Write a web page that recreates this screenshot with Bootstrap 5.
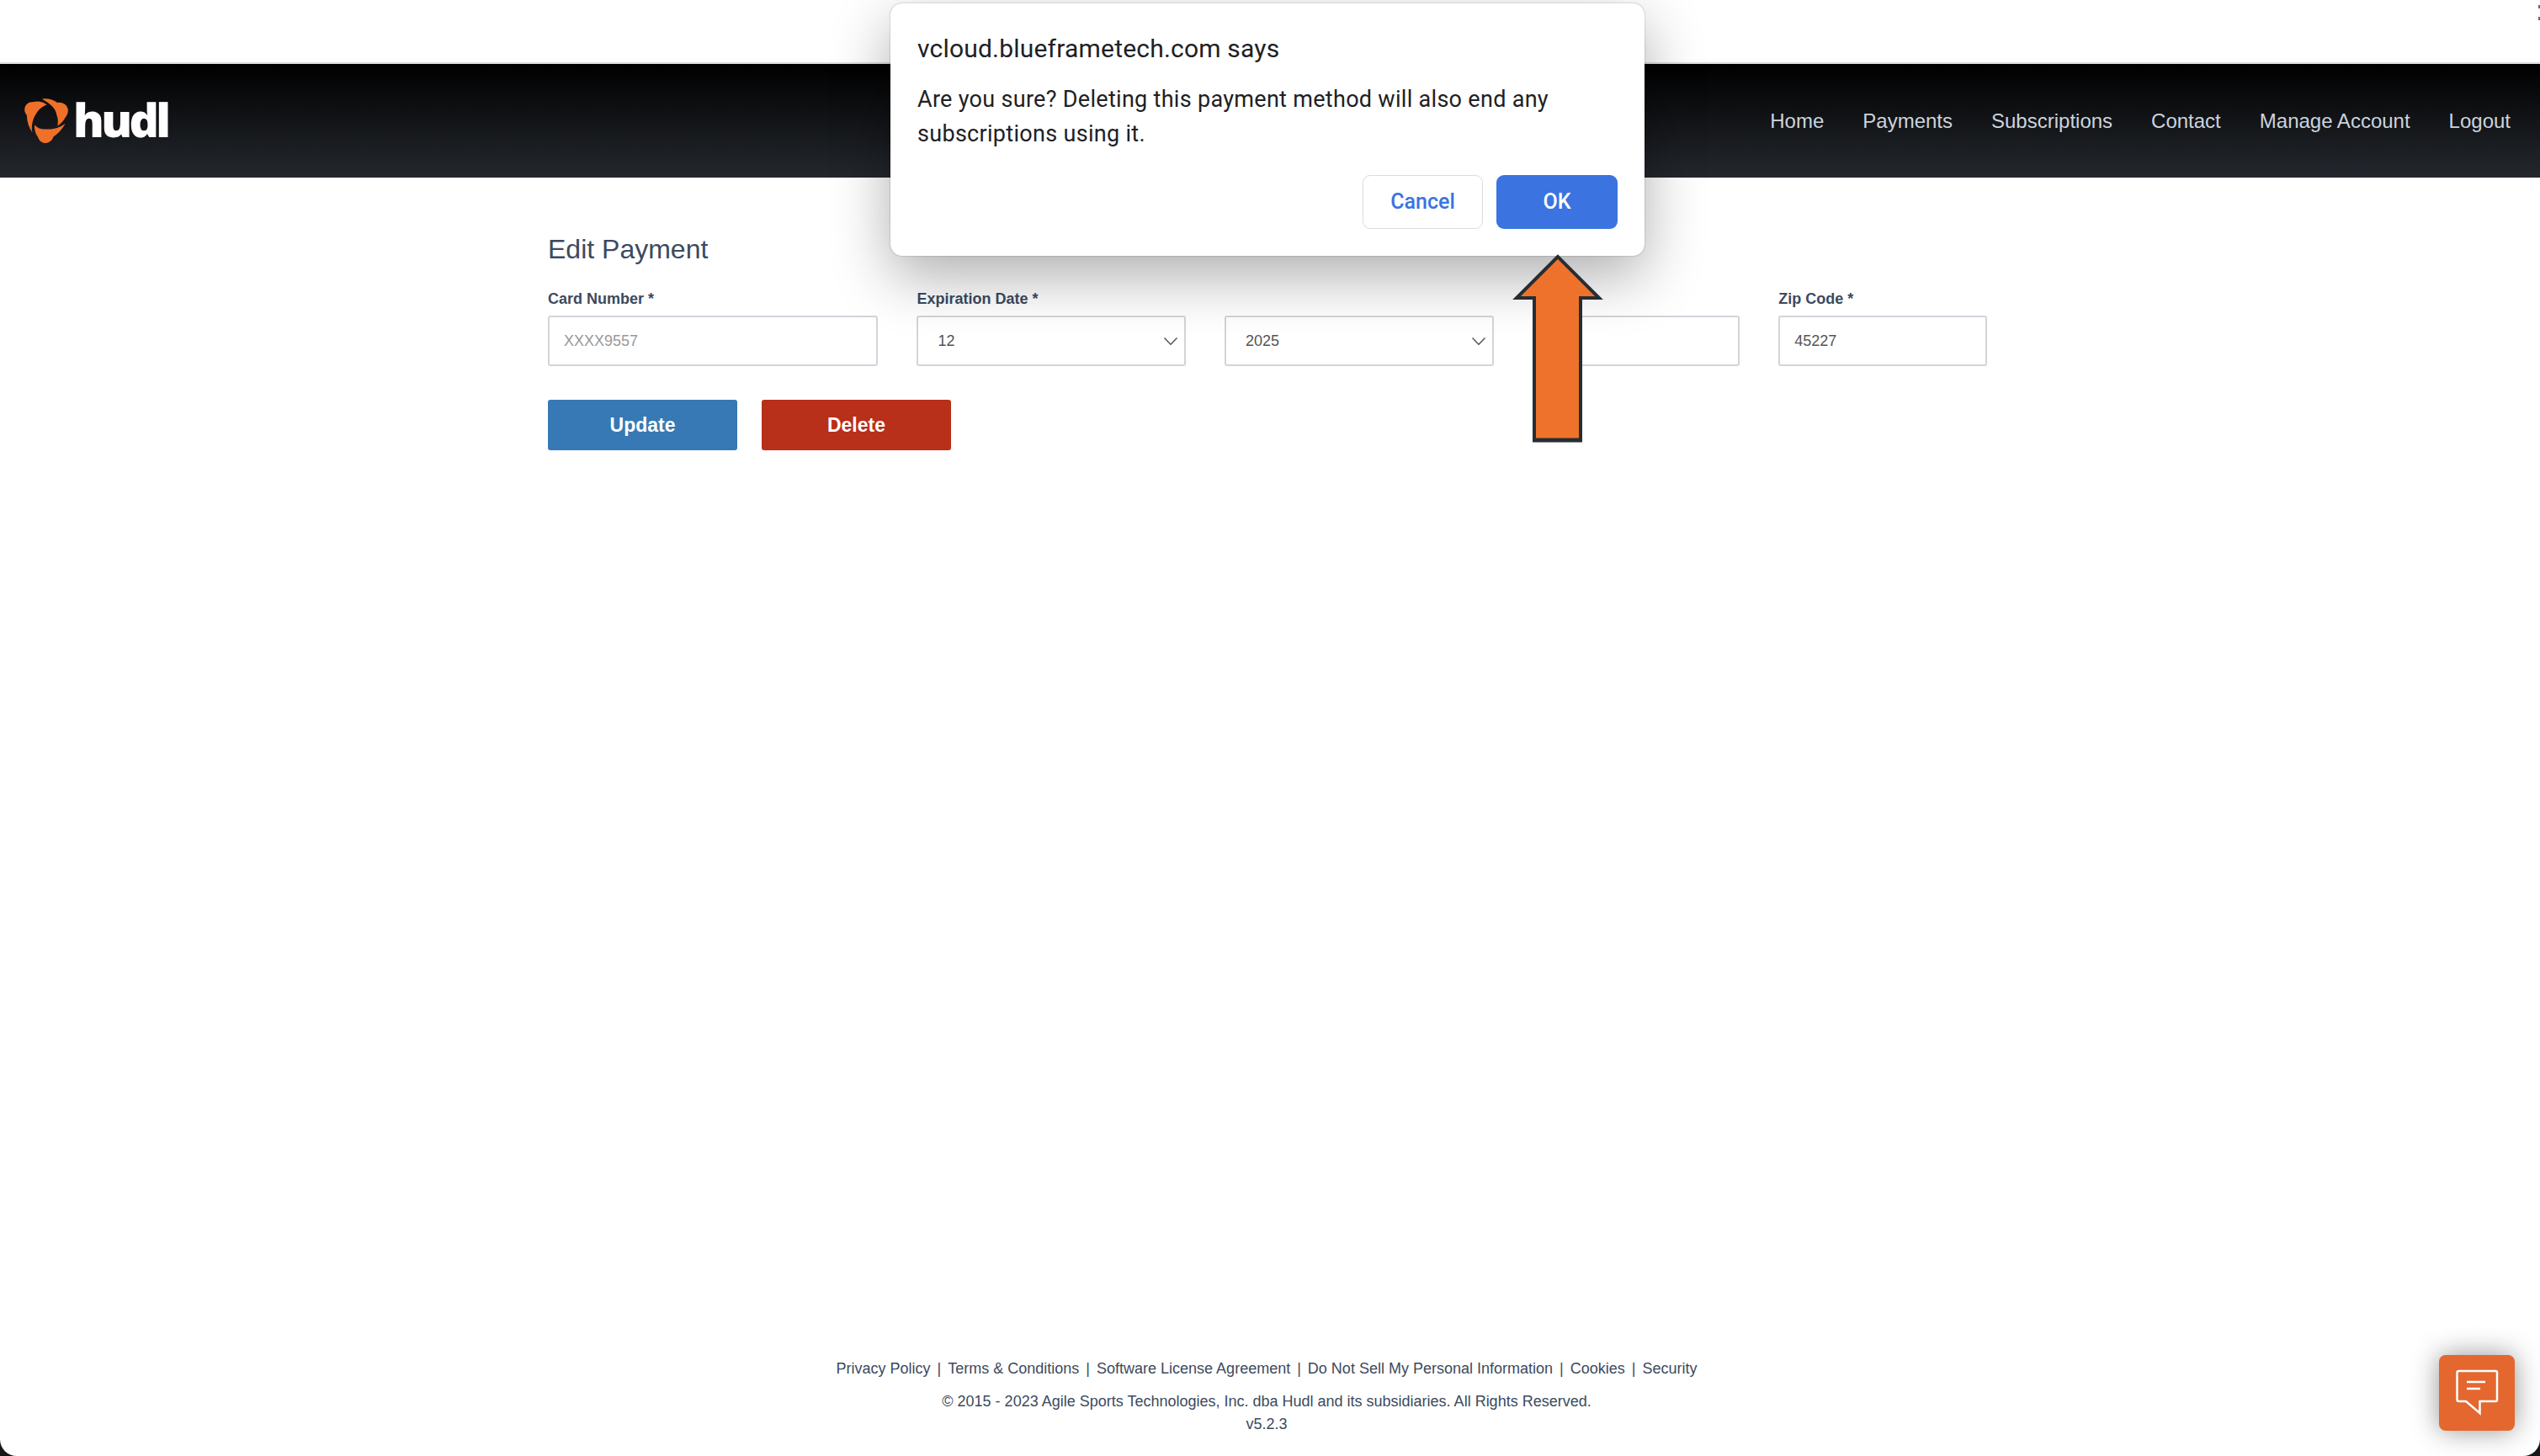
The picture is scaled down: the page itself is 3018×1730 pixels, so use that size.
<!DOCTYPE html>
<html lang="en">
<head>
<meta charset="utf-8">
<title>Edit Payment</title>
<link rel="stylesheet" href="https://cdn.jsdelivr.net/npm/bootstrap@5.3.0/dist/css/bootstrap.min.css">
<style>
html{background:#15181b;height:100%}
body{background:#fff;height:1730px;overflow:hidden;border-radius:0 0 20px 20px;font-family:"Liberation Sans",Arial,sans-serif;color:#3c4a5e;position:relative}
.top-strip{height:76px;background:#fff;border-bottom:2px solid #ddd;flex:none}
.kebab{position:absolute;top:6px;right:0;width:2px;height:18px;border-top:4px solid #666;border-bottom:4px solid #666}
.hudl-nav{height:135px;flex:none;background:linear-gradient(#000,#24282e);padding:0 35px 0 29px}
.hudl-word{font-family:"Open Sans",sans-serif;font-weight:800;font-size:55px;line-height:1;letter-spacing:-3.6px;color:#fff;margin-left:6px;position:relative;top:-2px}
.hudl-links{gap:46px}
.hudl-links a{color:#cdd3dd;text-decoration:none;font-size:24px;line-height:1}
.page-main{width:1710px;margin:0 auto;position:relative;left:-3px}
.page-title{font-size:32px;line-height:38px;font-weight:400;margin:66px 0 0;color:#3c4a5e}
.field-row{gap:46px;margin-top:29px}
.field-label{display:block;font-size:18px;font-weight:700;line-height:22px;margin-bottom:9px;color:#3c4a5e}
.w-a{width:393px}.w-b{width:320px}.w-c{width:247px}.w-d{width:248px}
.hudl-input{height:60px;border:2px solid #d3d4da;border-radius:3px;font-size:18px;color:#555;padding:0 17px;box-shadow:none;background-color:#fff}
.hudl-input::placeholder{color:#999}
.hudl-select{padding-left:23px;background-position:right 8px center;background-size:16px 9px;background-image:url("data:image/svg+xml,%3csvg xmlns='http://www.w3.org/2000/svg' viewBox='0 0 16 9'%3e%3cpath fill='none' stroke='%23555' stroke-width='1.5' d='M.5.5 8 8.2 15.5.5'/%3e%3c/svg%3e")}
.btn-row{gap:29px;margin-top:40px}
.hudl-btn{width:225px;height:60px;border:0;border-radius:3px;color:#fff;font-size:23px;font-weight:700;padding:0}
.hudl-blue{background:#3679b5}.hudl-red{background:#b82f1a}
.hudl-blue:hover{background:#3679b5;color:#fff}.hudl-red:hover{background:#b82f1a;color:#fff}
.page-foot{margin-top:auto;padding-bottom:24px;width:3010px;font-size:18px;color:#3c4a5e;text-align:center;line-height:27px}
.foot-links{line-height:22px;margin-bottom:15px}
.foot-links a{color:#3c4a5e;text-decoration:none}
.foot-links .sep{margin:0 8px}
.alert-box{position:absolute;left:1058px;top:4px;width:896px;height:300px;background:#fff;border-radius:14px;box-shadow:0 0 2px rgba(0,0,0,.35),0 24px 70px rgba(0,0,0,.32);padding:36px 32px 32px;font-family:Roboto,Arial,sans-serif;color:#202124}
.alert-title{font-size:30px;line-height:36px;letter-spacing:.2px}
.alert-body{font-size:27px;line-height:41px;margin-top:22px;letter-spacing:.3px}
.alert-actions{gap:16px;position:absolute;right:32px;top:204px}
.alert-btn{height:64px;border-radius:9px;font-size:25px;font-weight:500;padding:0;font-family:Roboto,Arial,sans-serif}
.alert-cancel{width:143px;background:#fff;border:1px solid #dadce0;color:#3b73e0}
.alert-ok{width:144px;background:#3b73e1;border:0;color:#fff}
.alert-ok:hover{background:#3b73e1;color:#fff}.alert-cancel:hover{background:#fff;color:#3b73e0}
.arrow-mark{position:absolute;left:1796px;top:300px}
.chat-launch{position:absolute;left:2898px;top:1610px;width:90px;height:90px;border-radius:8px;background:#e4672f;box-shadow:0 0 32px rgba(0,0,0,.42)}
</style>
</head>
<body class="d-flex flex-column">
<div class="top-strip"></div>
<div class="kebab"></div>
<nav class="hudl-nav d-flex align-items-center justify-content-between">
  <div class="d-flex align-items-center">
    <svg width="52" height="53" viewBox="87 350 156 160" aria-hidden="true">
      <g fill="#ef7029">
        <path d="M167 372C155 362 135 358 120 362 100 362 88 372 87 390 87 400 92 405 95 410 96 435 103 455 115 472 110 450 115 420 135 395 143 385 155 378 167 372Z"/>
        <path d="M150 352C165 348 190 352 205 365 220 362 240 370 243 390 244 405 238 412 232 420 228 430 215 442 205 448 208 435 207 420 202 408 200 392 188 372 150 352Z"/>
        <path d="M123 445C135 458 150 462 165 460 190 462 215 455 233 440 222 462 205 478 190 488 185 505 170 510 160 510 145 508 138 498 135 488 125 475 122 460 123 445Z"/>
      </g>
    </svg>
    <span class="hudl-word">hudl</span>
  </div>
  <div class="hudl-links d-flex align-items-center">
    <a href="#">Home</a><a href="#">Payments</a><a href="#">Subscriptions</a><a href="#">Contact</a><a href="#">Manage Account</a><a href="#">Logout</a>
  </div>
</nav>
<main class="page-main">
  <h1 class="page-title">Edit Payment</h1>
  <form>
    <div class="field-row d-flex">
      <div class="w-a"><label class="field-label">Card Number *</label><input class="form-control hudl-input" placeholder="XXXX9557"></div>
      <div class="w-b"><label class="field-label">Expiration Date *</label><select class="form-select hudl-input hudl-select"><option>12</option></select></div>
      <div class="w-b"><label class="field-label">&nbsp;</label><select class="form-select hudl-input hudl-select"><option>2025</option></select></div>
      <div class="w-c"><label class="field-label">&nbsp;</label><input class="form-control hudl-input"></div>
      <div class="w-d"><label class="field-label">Zip Code *</label><input class="form-control hudl-input" value="45227"></div>
    </div>
    <div class="btn-row d-flex">
      <button type="button" class="btn hudl-btn hudl-blue">Update</button>
      <button type="button" class="btn hudl-btn hudl-red">Delete</button>
    </div>
  </form>
</main>
<footer class="page-foot">
  <div class="foot-links"><a href="#">Privacy Policy</a><span class="sep">|</span><a href="#">Terms &amp; Conditions</a><span class="sep">|</span><a href="#">Software License Agreement</a><span class="sep">|</span><a href="#">Do Not Sell My Personal Information</a><span class="sep">|</span><a href="#">Cookies</a><span class="sep">|</span><a href="#">Security</a></div>
  <div>© 2015 - 2023 Agile Sports Technologies, Inc. dba Hudl and its subsidiaries. All Rights Reserved.</div>
  <div>v5.2.3</div>
</footer>

<div class="alert-box">
  <div class="alert-title">vcloud.blueframetech.com says</div>
  <div class="alert-body">Are you sure? Deleting this payment method will also end any subscriptions using it.</div>
  <div class="alert-actions d-flex">
    <button type="button" class="btn alert-btn alert-cancel">Cancel</button>
    <button type="button" class="btn alert-btn alert-ok">OK</button>
  </div>
</div>

<svg class="arrow-mark" width="110" height="232" viewBox="1796 300 110 232" aria-hidden="true">
  <path d="M1851 305 1802 354H1823V523H1878V354H1900Z" fill="#ef722c" stroke="#262d33" stroke-width="4"/>
  <path d="M1821 523H1880" stroke="#262d33" stroke-width="5" fill="none"/>
</svg>

<div class="chat-launch">
  <svg width="90" height="90" viewBox="2898 1610 90 90" aria-hidden="true">
    <path d="M2921.5 1629H2965a2 2 0 0 1 2 2V1663a2 2 0 0 1-2 2H2946.5V1679L2930 1665H2921.5a2 2 0 0 1-2-2V1631a2 2 0 0 1 2-2Z" fill="none" stroke="#fff" stroke-width="2.5"/>
    <path d="M2931 1642H2953M2931 1650H2947" stroke="#fff" stroke-width="2.5" fill="none"/>
  </svg>
</div>
<script src="https://cdn.jsdelivr.net/npm/bootstrap@5.3.0/dist/js/bootstrap.bundle.min.js"></script>
</body>
</html>
